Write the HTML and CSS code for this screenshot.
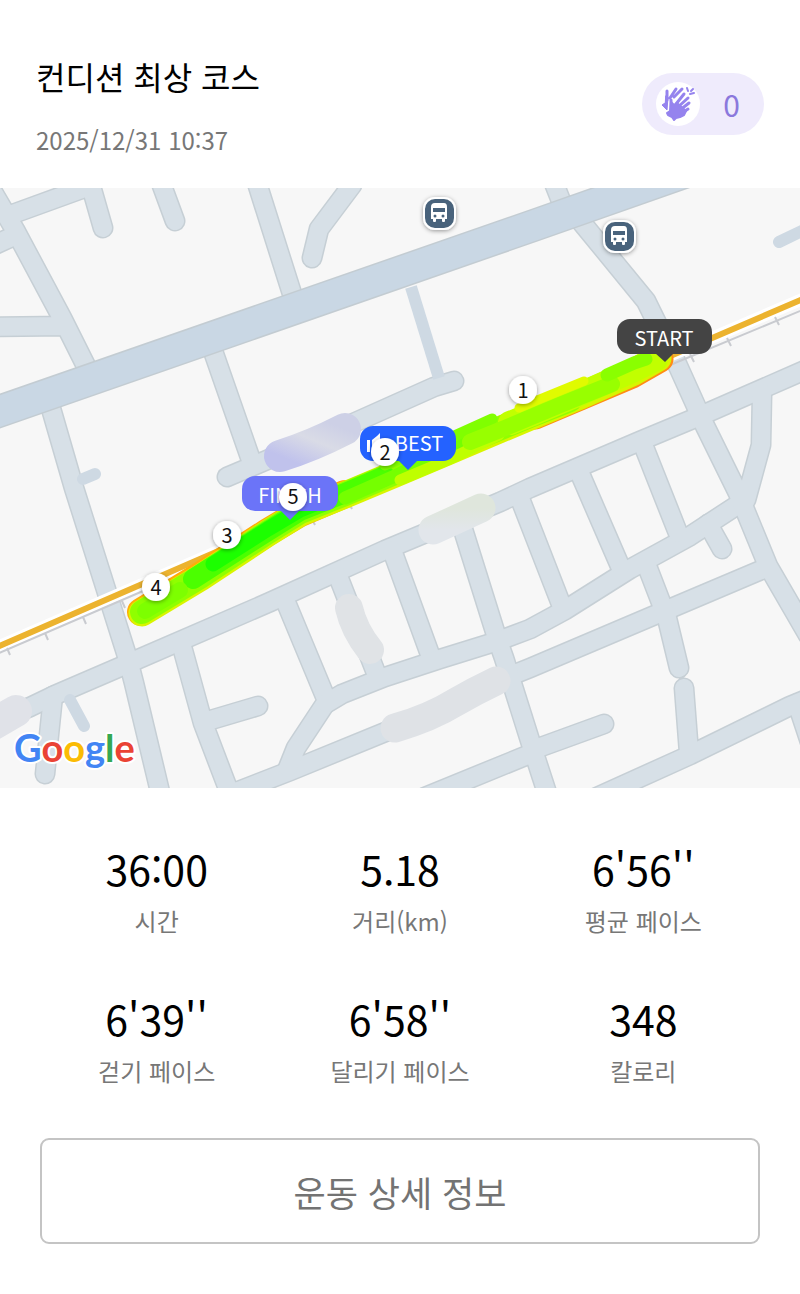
FILE: index.html
```html
<!DOCTYPE html>
<html lang="ko">
<head>
<meta charset="utf-8">
<meta name="viewport" content="width=device-width, initial-scale=1">
<title>컨디션 최상 코스</title>
<link rel="stylesheet" href="styles.css">
</head>
<body>
<header class="header">
  <div class="heading">
    <h1 class="title">컨디션 최상 코스</h1>
    <time class="date" datetime="2025-12-31T10:37">2025/12/31 10:37</time>
  </div>
  <button class="clap" type="button">
    <span class="clap-icon">
      <svg viewBox="0 0 44 44" width="44" height="44" aria-hidden="true">
        <g fill="none" stroke="#9583ee" stroke-linecap="round" stroke-linejoin="round">
          <path stroke-width="3" d="M11 9V18M14 16L20 7M18 15L26 7"/>
          <path fill="#9583ee" stroke-width="1" d="M10 14L12 15L11 28L9 26L6 23L9 21Z"/>
          <path stroke-width="3" d="M15 18V29M20 22L28 12M22 25L32 16M24 28L33 21M26 31L32 27"/>
          <path stroke-width="2" d="M31 6L32 9M34 12L38 11M35 9L37 7"/>
          <path fill="#9583ee" stroke-width="2" d="M15 20L18 23L21 21L30 29L28 33L24 35L20 36L18 38L16 35L12 33L11 31L14 29Z"/>
        </g>
      </svg>
    </span>
    <span class="clap-count">0</span>
  </button>
</header>

<main>
  <svg class="map" viewBox="0 0 800 600" role="img" aria-label="코스 지도">
    <defs>
      <g id="roads">
        <path d="M-6 6L15 42L62 130L88 182M-10 59L14 48M10 27L90 -2M91 -2L103 40M161 -5L175 33M-10 139L66 138M257 -5L294 112M352 -3L319 41L312 70"/>
        <path d="M454 193L434 199L340 241L227 289M213 163L252 275M50 217L74 300L127 468L134 495L161 608"/>
        <path d="M-10 536L30 519L55 507L127 476L270 414L385 362L500 314L530 300L640 253L700 228L812 179"/>
        <path d="M53 508L45 586M181 455L203 535L230 606M204 534L258 518M218 611L290 583L400 538L505 490L530 480L662 424L766 380"/>
        <path d="M285 412L327 513L296 560L288 580M338 388L378 490M392 362L432 472M461 335L497 450L504 470L533 562L548 608"/>
        <path d="M327 515L342 506L385 489L440 471L498 453L530 441L565 422L630 381L690 348L742 314"/>
        <path d="M519 308L561 416M578 281L620 378M642 254L678 345M578 30L646 113L678 178L705 238L738 305L768 378L808 447M552 -10L563 18M762 205L761 257L746 312"/>
        <path d="M647 378L667 430L679 480M684 500L689 565M586 614L690 567L790 518L812 509M797 515L812 560M708 336L722 361M538 560L604 536M425 609L535 564"/>
      </g>
      <g id="bus">
        <rect x="-15" y="-15" width="31" height="31" rx="11" fill="#4a647b" stroke="#fff" stroke-width="2"/>
        <path fill="#fff" d="M-8 -6Q-8 -10 -4 -10H5Q8 -10 8 -6V6H6V8Q6 9 5 9H4Q3 9 3 8V6H-3V8Q-3 9 -4 9H-5Q-6 9 -6 8V6H-8Z"/>
        <path fill="#4a647b" d="M-6 -5H6V-1H-6Z"/>
        <circle cx="-4" cy="3" r="1.5" fill="#4a647b"/><circle cx="4" cy="3" r="1.5" fill="#4a647b"/>
      </g>
      <linearGradient id="lavender" x1="0" y1="1" x2="1" y2="0">
        <stop offset="0" stop-color="#c0c2ec"/><stop offset=".55" stop-color="#d9dbe6"/><stop offset="1" stop-color="#cdd0e6"/>
      </linearGradient>
      <linearGradient id="mist" x1="0" y1="0" x2="0" y2="1">
        <stop offset="0" stop-color="#dfe6dc"/><stop offset="1" stop-color="#e2e6eb"/>
      </linearGradient>
      <filter id="shadow" x="-50%" y="-50%" width="200%" height="200%">
        <feDropShadow dx="0" dy="1" stdDeviation="2" flood-opacity=".4"/>
      </filter>
    </defs>

    <rect width="800" height="600" fill="#f7f7f7"/>
    <use href="#roads" class="road-edge"/>
    <use href="#roads" class="road-fill"/>
    <path class="highway-edge" d="M-20 230L535 37L720 -28"/>
    <path class="highway-fill" d="M-20 230L535 37L720 -28"/>
    <path class="alley" d="M411 99L439 190"/>
    <path class="alley alley-round" d="M83 291L95 286M70 512L84 538M779 54L812 38"/>

    <path class="rail-casing" d="M-10 462L223 361M660 172L812 107"/>
    <path class="rail-tie" d="M-10 469L143 403L300 336M640 190L675 175L812 118M7 460L10 467M45 445L48 452M83 429L86 436M122 413L125 420M312 331L315 337M349 315L352 321M690 166L694 174M727 150L731 158M775 129L779 137"/>
    <path class="rail" d="M-10 462L223 361L300 328M640 181L812 107"/>

    <g class="track">
      <path stroke="#ffac08" stroke-width="28" d="M141 424L200 388L268 344L300 325L345 306"/>
      <path stroke="#ff8b16" stroke-width="27" d="M535 228L580 209L632 187L660 171"/>
      <path stroke="#d8f500" stroke-width="27" d="M142 425L200 390L268 345L300 325L345 307L395 286L440 267L530 229L580 208L632 185L658 170"/>
      <path stroke="#8fff00" stroke-width="24" d="M142 424L200 389L268 344L300 324L345 306L395 285L440 265L530 228L570 212"/>
      <path stroke="#c1ff00" stroke-width="24" d="M510 235L530 227L580 206L632 183L656 171"/>
      <path stroke="#4bff00" stroke-width="20" d="M193 391L268 343L300 323L345 305L385 288"/>
      <path stroke="#1cff00" stroke-width="15" d="M213 376L268 341L300 322L325 312"/>
      <path stroke="#75ff00" stroke-width="13" d="M345 310L395 288L445 263L480 243"/>
      <path stroke="#bfff00" stroke-width="11" d="M400 292L450 271L499 247"/>
      <path stroke="#80ff00" stroke-width="11" d="M385 277L430 259L492 231"/>
      <path stroke="#98ff00" stroke-width="16" d="M470 254L505 240L560 217L612 196"/>
      <path stroke="#e0fb00" stroke-width="9" d="M519 220L540 211L584 193"/>
      <path stroke="#8aff00" stroke-width="13" d="M607 187L634 175L646 171"/>
      <path stroke="#7dff00" stroke-width="16" d="M145 423L180 402"/>
    </g>

    <path stroke="url(#lavender)" class="blob" stroke-width="32" d="M280 268Q312 258 345 241"/>
    <path stroke="url(#mist)" class="blob" stroke-width="29" d="M433 342L481 320"/>
    <path stroke="#e0e3e6" class="blob" stroke-width="28" d="M349 420Q354 442 370 462"/>
    <path stroke="#dfe2e6" class="blob" stroke-width="29" d="M395 540Q430 530 456 514Q475 503 496 493"/>
    <path stroke="#e0e2e8" class="blob" stroke-width="32" d="M-20 544L16 523"/>

    <use href="#bus" x="439" y="25" filter="url(#shadow)"/>
    <use href="#bus" x="619" y="48" filter="url(#shadow)"/>

    <g fill="#444">
      <rect x="617" y="131" width="95" height="35" rx="13"/><path d="M655 165H674L665 174Z"/>
    </g>
    <text class="flag" x="664" y="158">START</text>
    <g fill="#2462ff">
      <rect x="360" y="238" width="96" height="35" rx="13"/><path d="M398 272H418L408 282Z"/>
    </g>
    <path fill="#fff" d="M367 252H370V264H367ZM372 252L377 248L380 245V251H386V264H372Z"/>
    <text class="flag" x="419" y="263">BEST</text>
    <g fill="#6b74f8">
      <rect x="242" y="288" width="96" height="35" rx="13"/><path d="M280 322H300L290 332Z"/>
    </g>
    <text class="flag" x="290" y="315">FINISH</text>

    <g fill="#fff" filter="url(#shadow)">
      <circle cx="523" cy="202" r="14"/><circle cx="385" cy="264" r="14"/><circle cx="227" cy="347" r="14"/><circle cx="156" cy="399" r="14"/><circle cx="293" cy="309" r="14"/>
    </g>
    <g class="lap">
      <text x="523" y="210">1</text><text x="385" y="272">2</text><text x="227" y="355">3</text><text x="156" y="407">4</text><text x="293" y="316">5</text>
    </g>
    <text class="google" x="14" y="574"><tspan fill="#4285f4">G</tspan><tspan fill="#ea4335">o</tspan><tspan fill="#fbbc05">o</tspan><tspan fill="#4285f4">g</tspan><tspan fill="#34a853">l</tspan><tspan fill="#ea4335">e</tspan></text>
  </svg>

  <dl class="stats">
    <div class="stat"><dt class="label">시간</dt><dd class="value">36:00</dd></div>
    <div class="stat"><dt class="label">거리(km)</dt><dd class="value">5.18</dd></div>
    <div class="stat"><dt class="label">평균 페이스</dt><dd class="value">6'56''</dd></div>
    <div class="stat"><dt class="label">걷기 페이스</dt><dd class="value">6'39''</dd></div>
    <div class="stat"><dt class="label">달리기 페이스</dt><dd class="value">6'58''</dd></div>
    <div class="stat"><dt class="label">칼로리</dt><dd class="value">348</dd></div>
  </dl>
  <div class="actions">
    <button class="detail" type="button">운동 상세 정보</button>
  </div>
</main>
</body>
</html>
```
FILE: styles.css
```css
* { box-sizing: border-box; }

body {
  margin: 0;
  background: #fff;
  color: #000;
  font-family: "Noto Sans CJK KR", sans-serif;
}

button { font-family: inherit; cursor: pointer; }

.header {
  display: flex;
  align-items: center;
  justify-content: space-between;
  padding: 50px 36px 30px;
}

.heading {
  display: flex;
  flex-direction: column;
  gap: 20px;
}

.title {
  margin: 0;
  font-size: 32px;
  font-weight: 400;
  line-height: 52px;
}

.date {
  color: #777;
  font-size: 24px;
  line-height: 36px;
}

.clap {
  display: flex;
  align-items: center;
  gap: 23px;
  height: 62px;
  padding: 0 24px 0 14px;
  border: 0;
  border-radius: 31px;
  background: #efebfc;
  color: #8b78dc;
}

.clap-icon {
  display: flex;
  border-radius: 50%;
  background: #fff;
}

.clap-count {
  font-size: 30px;
  line-height: 44px;
}

.map {
  display: block;
  width: 100%;
  height: auto;
}

.road-edge, .road-fill, .highway-edge, .highway-fill, .alley, .rail-casing, .rail, .rail-tie, .track, .blob {
  fill: none;
  stroke-linejoin: round;
}

.road-edge { stroke: #c6cfd5; stroke-width: 21px; stroke-linecap: round; }
.road-fill { stroke: #d7e0e7; stroke-width: 18px; stroke-linecap: round; }
.highway-edge { stroke: #c3ccd2; stroke-width: 33px; }
.highway-fill { stroke: #c9d7e4; stroke-width: 30px; }
.alley { stroke: #ced9e3; stroke-width: 12px; }
.alley-round { stroke-linecap: round; }
.rail-casing { stroke: #fff; stroke-width: 12px; }
.rail { stroke: #ecb32f; stroke-width: 6px; }
.rail-tie { stroke: #c9cbd0; stroke-width: 2px; }
.track, .blob { stroke-linecap: round; }

.flag {
  fill: #fff;
  font-size: 20px;
  text-anchor: middle;
}

.lap {
  fill: #111;
  font-size: 20px;
  text-anchor: middle;
}

.google {
  font-family: Lato, sans-serif;
  font-size: 38px;
  font-weight: 700;
  stroke: #fff;
  stroke-width: 4px;
  stroke-linejoin: round;
  paint-order: stroke;
}

.stats {
  display: grid;
  grid-template-columns: repeat(3, 1fr);
  row-gap: 49px;
  margin: 0;
  padding: 50px 35px 49px;
}

.stat {
  display: flex;
  flex-direction: column-reverse;
  align-items: center;
  gap: 5px;
}

.value {
  margin: 0;
  font-size: 41px;
  line-height: 60px;
}

.label {
  color: #777;
  font-size: 24px;
  line-height: 36px;
}

.actions { padding: 0 40px 50px; }

.detail {
  width: 100%;
  height: 106px;
  border: 2px solid #c4c4c4;
  border-radius: 9px;
  background: #fff;
  color: #737373;
  font-size: 35px;
}
```
